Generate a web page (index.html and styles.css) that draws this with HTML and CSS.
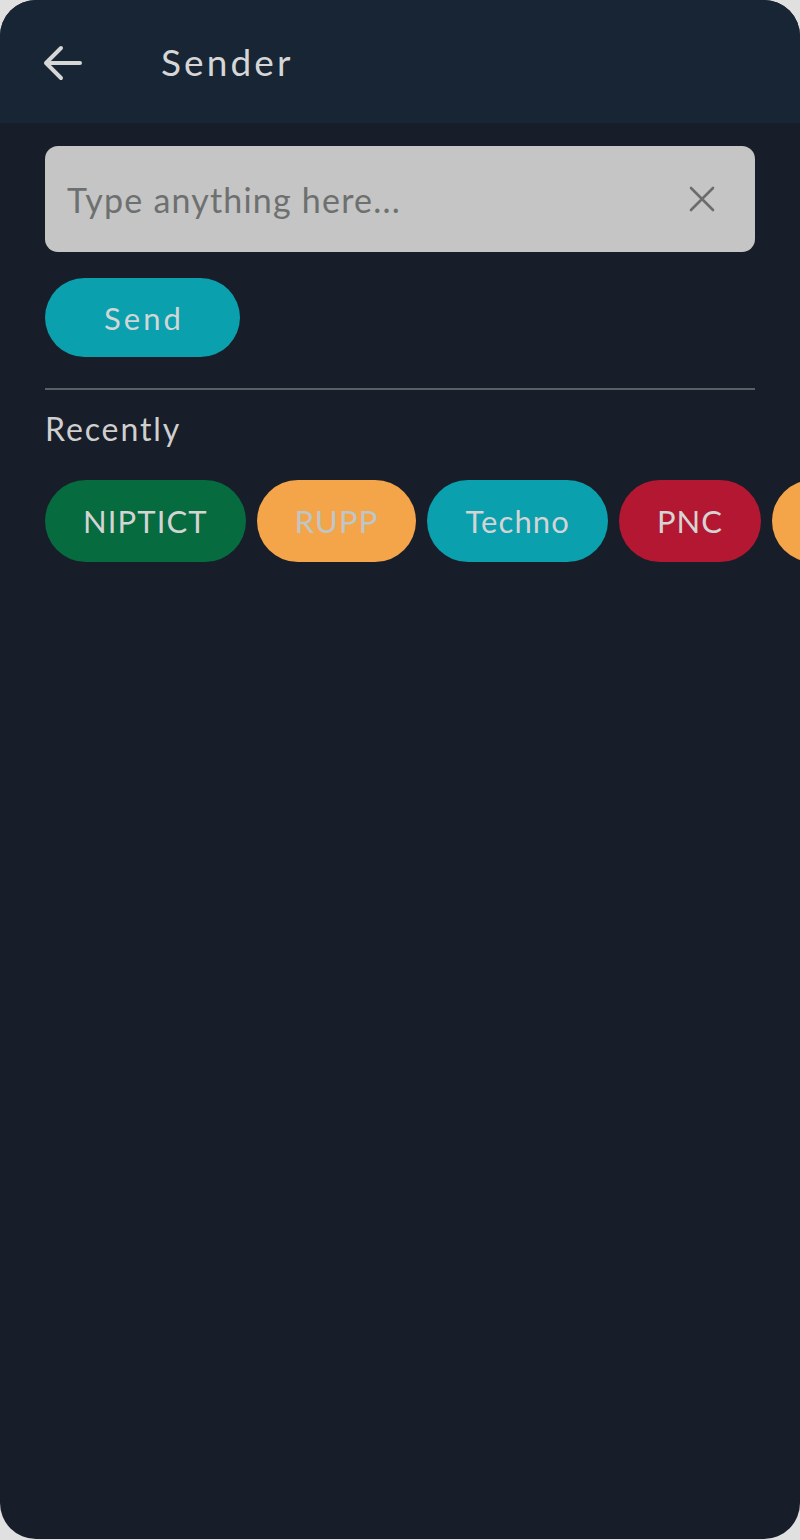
FILE: index.html
```html
<!DOCTYPE html>
<html lang="en">
<head>
<meta charset="utf-8">
<title>Sender</title>
<link rel="stylesheet" href="styles.css">
</head>
<body>
<div class="phone">
  <header class="topbar">
    <button class="back" aria-label="Back">
      <svg width="40" height="36" viewBox="0 0 40 36" fill="none" stroke="#d6d6d6" stroke-width="4" stroke-linecap="round" stroke-linejoin="round">
        <path d="M37 18H4"/>
        <path d="M18 3L3 18l15 15"/>
      </svg>
    </button>
    <h1 class="title">Sender</h1>
  </header>
  <main class="content">
    <div class="field">
      <span class="placeholder">Type anything here...</span>
      <svg class="clear" width="26" height="26" viewBox="0 0 26 26" stroke="#6b6d6d" stroke-width="2.6" stroke-linecap="round">
        <path d="M2 2L24 24M24 2L2 24"/>
      </svg>
    </div>
    <button class="send">Send</button>
    <hr class="divider">
    <h2 class="section">Recently</h2>
    <div class="chips">
      <span class="chip green">NIPTICT</span>
      <span class="chip orange">RUPP</span>
      <span class="chip teal">Techno</span>
      <span class="chip red">PNC</span>
      <span class="chip orange">RUPP</span>
    </div>
  </main>
</div>
</body>
</html>
```
FILE: styles.css
```css
html, body {
  margin: 0;
  padding: 0;
  background: #e0e0e0;
}
body {
  font-family: "Lato", "Noto Sans", sans-serif;
}
.phone {
  width: 800px;
  height: 1539px;
  background: #181e29;
  border-radius: 36px;
  overflow: hidden;
  display: flex;
  flex-direction: column;
}
.topbar {
  height: 123px;
  background: #172535;
  display: flex;
  align-items: center;
  padding: 0 0 0 43px;
  box-sizing: border-box;
  flex-shrink: 0;
}
.back {
  background: none;
  border: 0;
  padding: 0;
  width: 40px;
  height: 36px;
  display: flex;
  margin-top: 2px;
}
.title {
  margin: 0 0 0 78px;
  font-weight: 400;
  font-size: 37px;
  color: #d6d6d6;
  letter-spacing: 3.1px;
}
.content {
  padding: 23px 45px 0 45px;
  display: flex;
  flex-direction: column;
  align-items: flex-start;
  overflow: hidden;
}
.field {
  width: 710px;
  height: 106px;
  box-sizing: border-box;
  background: #c4c5c4;
  border-radius: 13px;
  display: flex;
  align-items: center;
  justify-content: space-between;
  padding: 0 40px 0 22px;
}
.placeholder {
  font-size: 34px;
  color: #6e7070;
  letter-spacing: 1.2px;
}
.send {
  margin-top: 26px;
  width: 195px;
  height: 79px;
  border: 0;
  border-radius: 40px;
  background: #0aa0ae;
  color: #d2d6d6;
  font-family: inherit;
  font-size: 31px;
  letter-spacing: 3px;
  text-indent: 3px;
  padding: 0;
}
.divider {
  margin: 31px 0 0 0;
  width: 710px;
  border: 0;
  height: 2px;
  background: #5a5f66;
}
.section {
  margin: 19px 0 0 0;
  font-weight: 400;
  font-size: 32px;
  color: #cfcfcf;
  letter-spacing: 1.9px;
}
.chips {
  margin-top: 32px;
  display: flex;
  gap: 11px;
  flex-wrap: nowrap;
}
.chip {
  flex-shrink: 0;
  height: 82px;
  border-radius: 41px;
  display: flex;
  align-items: center;
  justify-content: center;
  padding: 0 38px;
  font-size: 31px;
  color: #d4d4d4;
  letter-spacing: 1.1px;
}
.green { background: #066b3e; }
.orange { background: #f4a54a; color: #bfc6c8; }
.teal { background: #0aa0ae; }
.red { background: #b41731; }
```
